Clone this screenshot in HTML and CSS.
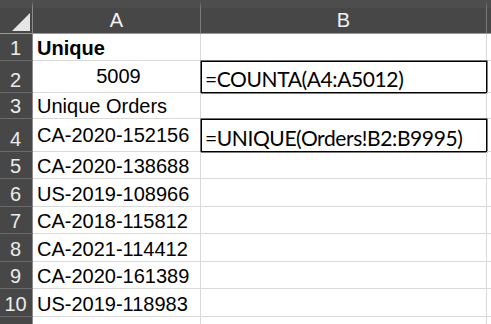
FILE: index.html
```html
<!DOCTYPE html>
<html>
<head>
<meta charset="utf-8">
<link rel="stylesheet" href="styles.css">
</head>
<body>
<div class="sheet">
  <div class="corner"><div class="tri"></div></div>
  <div class="colhead">A</div>
  <div class="colhead">B</div>
  <div class="colhead end"></div>

  <div class="rowhead r1">1</div>
  <div class="cell a bold">Unique</div>
  <div class="cell b"></div>
  <div class="cell e"></div>

  <div class="rowhead r2">2</div>
  <div class="cell a center mid">5009</div>
  <div class="cell b boxed">=COUNTA(A4:A5012)</div>
  <div class="cell e"></div>

  <div class="rowhead r3">3</div>
  <div class="cell a">Unique Orders</div>
  <div class="cell b"></div>
  <div class="cell e"></div>

  <div class="rowhead r4">4</div>
  <div class="cell a mid">CA-2020-152156</div>
  <div class="cell b boxed">=UNIQUE(Orders!B2:B9995)</div>
  <div class="cell e"></div>

  <div class="rowhead">5</div>
  <div class="cell a">CA-2020-138688</div>
  <div class="cell b"></div>
  <div class="cell e"></div>

  <div class="rowhead">6</div>
  <div class="cell a">US-2019-108966</div>
  <div class="cell b"></div>
  <div class="cell e"></div>

  <div class="rowhead">7</div>
  <div class="cell a">CA-2018-115812</div>
  <div class="cell b"></div>
  <div class="cell e"></div>

  <div class="rowhead">8</div>
  <div class="cell a">CA-2021-114412</div>
  <div class="cell b"></div>
  <div class="cell e"></div>

  <div class="rowhead">9</div>
  <div class="cell a">CA-2020-161389</div>
  <div class="cell b"></div>
  <div class="cell e"></div>

  <div class="rowhead">10</div>
  <div class="cell a">US-2019-118983</div>
  <div class="cell b"></div>
  <div class="cell e"></div>

  <div class="rowhead">11</div>
  <div class="cell a">CA-2019-105830</div>
  <div class="cell b"></div>
  <div class="cell e"></div>
</div>
</body>
</html>
```
FILE: styles.css
```css
* { box-sizing: border-box; }
html, body { margin: 0; padding: 0; background: #ffffff; overflow: hidden; }
body { width: 491px; height: 324px; }

.sheet {
  display: grid;
  grid-template-columns: 33px 168px 286px 4px;
  grid-template-rows: 34px 27px 32px 26px 33px 27px 28px 27px 28px 27px 28px 27px;
  font-family: "Liberation Sans", Arial, sans-serif;
  font-size: 20px;
  color: #000;
}

.corner {
  background: #474747;
  border-right: 1px solid #8a8a8a;
  border-bottom: 1px solid #9a9a9a;
  position: relative;
  border-top: 8px solid #4d4d4d;
}
.tri {
  position: absolute;
  right: 2px;
  bottom: 2px;
  width: 0; height: 0;
  border-style: solid;
  border-width: 0 0 18px 18px;
  border-color: transparent transparent #e6e6e6 transparent;
}

.colhead {
  background: #474747;
  border-top: 8px solid #4d4d4d;
  border-right: 1px solid #7a7a7a;
  border-bottom: 1px solid #9a9a9a;
  color: #f2f2f2;
  display: flex;
  align-items: center;
  justify-content: center;
  padding-bottom: 1px;
  line-height: 1;
}
.colhead.end { border-right: none; }

.rowhead {
  background: #474747;
  color: #ececec;
  border-right: 1px solid #8a8a8a;
  border-bottom: 1px solid #6a6a6a;
  display: flex;
  align-items: flex-end;
  justify-content: center;
  line-height: 1;
  padding-bottom: 2px;
  padding-right: 1px;
}

.cell {
  border-right: 1px solid #d9d9d9;
  border-bottom: 1px solid #d9d9d9;
  display: flex;
  align-items: flex-end;
  line-height: 1;
  padding: 0 0 2px 4px;
  white-space: nowrap;
  overflow: hidden;
}
.cell.e { border-right: none; }
.bold { font-weight: bold; }
.center { justify-content: center; }
.mid { padding-bottom: 6px; }

.cell.b.boxed {
  border: 1px solid #000;
  box-shadow: 0 0 0 0.5px #000;
  font-family: Lato, "Noto Sans", sans-serif;
  font-size: 21px;
  padding: 0 0 3px 3px;
  letter-spacing: -0.4px;
}
```
